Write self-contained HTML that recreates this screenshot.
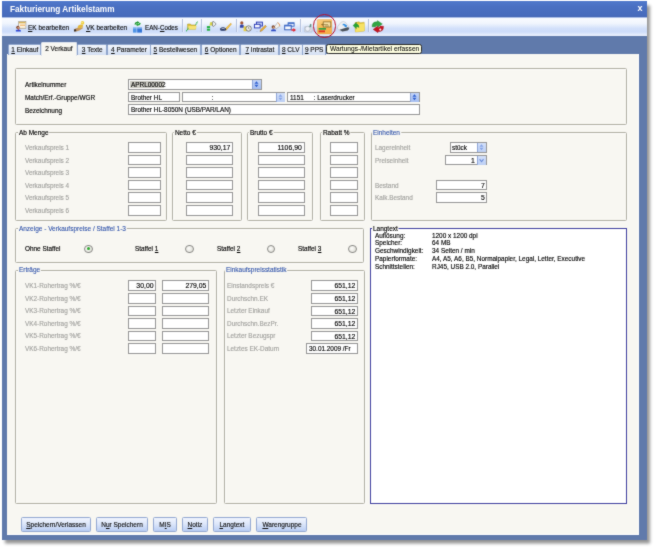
<!DOCTYPE html><html><head><meta charset="utf-8"><title>Fakturierung Artikelstamm</title><style>
html,body{margin:0;padding:0;}
body{width:656px;height:548px;background:#fff;overflow:hidden;position:relative;font-family:"Liberation Sans",sans-serif;font-size:7px;color:#000;-webkit-text-stroke:0.15px;}
#root{left:0;top:0;width:656px;height:548px;background:#fff;will-change:transform;filter:url(#soft);}
div,span{position:absolute;box-sizing:border-box;white-space:nowrap;}
.sl{transform:scaleX(0.915);transform-origin:0 50%;}
.sr{transform:scaleX(0.98);transform-origin:100% 50%;}
.sc{left:0;width:100%;text-align:center;transform:scaleX(0.915);transform-origin:50% 50%;}
.win{left:1.5px;top:1px;width:645.9px;height:538.8px;background:#607aab;box-shadow:3px 3.5px 3px rgba(0,0,0,0.42);}
.title{left:0;top:0;width:645.9px;height:16px;background:linear-gradient(#5079cc,#4a70c2 35%,#476bbc 92%,#4264b2);}
.title .t{left:8.6px;top:3.3px;font-weight:bold;font-size:9px;color:#fff;line-height:10px;-webkit-text-stroke:0;}
.tb{left:0.3px;top:16px;width:645.6px;height:19px;border-top:0.6px solid #a9bde6;background:linear-gradient(#f9fbff 0%,#f0f5fd 30%,#d2e0fa 58%,#cddcf9 76%,#edf2fd 100%);}
.tbt{font-size:7.1px;line-height:9px;top:23.6px;color:#111;}
.sep{top:19.4px;width:0.7px;height:13px;background:#b3c0dc;box-shadow:0.7px 0 0 rgba(255,255,255,0.7);}
.page{background:#f8f7f2;border-right:1px solid #fff;border-bottom:1px solid #fff;}
.tab{top:43.8px;height:10.9px;background:linear-gradient(#f3f6fc,#d3dff3);border:0.6px solid #8fa5cc;border-bottom:none;border-radius:1.5px 1.5px 0 0;font-size:7.1px;line-height:11.2px;color:#111;}
.tab.sel{top:42px;height:13.5px;background:#f8f7f2;border-color:#dfe4ee;line-height:12.4px;z-index:2;}
.gb{border:1px solid #b0afa4;border-radius:1.5px;box-shadow:0.6px 0.6px 0 #fff, inset 0.6px 0.6px 0 #fff;}
.gt{font-size:7.1px;line-height:8px;background:#f8f7f2;padding:0 1px;}
.blue{color:#2f52aa;-webkit-text-stroke:0.1px;}
.l{font-size:7px;line-height:8px;}
.dis{color:#a2a29f;}
.in{background:#fff;border:0.8px solid #969696;font-size:7px;line-height:9.6px;overflow:hidden;}
.in span{top:0;}
.cb{background:linear-gradient(#c9d9f8,#a9c0ee);border:0.6px solid #7f9bd8;border-radius:1px;}
.btn{top:517.3px;height:14.4px;border:0.7px solid #93a8d2;border-radius:1.5px;background:linear-gradient(#f0f4fd,#dde7fa 45%,#b9cdf3);font-size:7.1px;line-height:14.8px;color:#111;}
u{text-decoration:underline;text-decoration-thickness:0.5px;text-underline-offset:0.6px;}
</style></head><body>
<svg width="0" height="0" style="position:absolute"><filter id="soft" x="0" y="0" width="100%" height="100%" color-interpolation-filters="sRGB"><feConvolveMatrix order="3" kernelMatrix="1 3 1 3 24 3 1 3 1" divisor="40" edgeMode="duplicate" preserveAlpha="false"/></filter></svg>
<div id="root">
<div class="win">
<div class="title"><span class="t sl">Fakturierung Artikelstamm</span></div>
<div class="tb"></div>
</div>
<svg style="position:absolute;left:0;top:0" width="400" height="40" viewBox="0 0 400 40">
<!-- EK: card + person -->
<rect x="18.7" y="21.6" width="7.2" height="7" fill="#fffdf8" stroke="#978c74" stroke-width="0.6"/>
<rect x="19" y="21.9" width="6.6" height="1.5" fill="#d9b458"/>
<rect x="19.8" y="24.6" width="5.2" height="1.1" fill="#f0a54a"/>
<rect x="19.8" y="26.7" width="5.2" height="0.8" fill="#f3d9a6"/>
<circle cx="17.9" cy="27.4" r="1.7" fill="#7e4630"/><circle cx="18.3" cy="27.8" r="1" fill="#d39674"/>
<path d="M15.9 31.5 L15.9 30.6 Q16.1 29.4 18.3 29.4 Q20.7 29.4 20.9 30.6 L20.9 31.5 Z" fill="#2345dd"/>
<rect x="17.9" y="29.2" width="0.9" height="1.2" fill="#b83030"/>
<!-- VK: gold figure on hand -->
<path d="M74 29.3 Q77 27.2 80 28 L82.6 27.2 Q83.4 27.6 82.6 28.4 L79.4 30.4 Q76.6 31.6 74.2 31.4 Z" fill="#c39660"/>
<path d="M73.9 29.6 L76 29.2 L76.4 31.3 L74.1 31.6 Z" fill="#3a2f28"/>
<path d="M77.4 27.6 Q77.8 25.2 80.6 24.6 Q83.4 24.4 83.2 26.2 Q82 28 79.2 28.6 Z" fill="#e4b83c"/>
<circle cx="82.5" cy="22.9" r="1.8" fill="#f0d040"/><circle cx="82.1" cy="22.5" r="0.8" fill="#faeb9a"/>
<!-- EAN -->
<rect x="133" y="27.5" width="3.6" height="5.1" fill="#4f94e6"/><rect x="137.2" y="27.5" width="4.8" height="5.1" fill="#3576d6"/>
<rect x="133" y="27.5" width="9" height="1" fill="#9cc3f2"/>
<path d="M134.4 24.4 Q134.8 21.6 137.4 21.8 L137.4 21 L139.4 22.5 L137.4 24 L137.4 23.2 Q136.2 23.2 135.9 24.6 Z" fill="#1c962e"/>
<path d="M140.8 22.9 Q140.4 25.7 137.8 25.5 L137.8 26.3 L135.8 24.8 L137.8 23.3 L137.8 24.1 Q139 24.1 139.3 22.7 Z" fill="#27a83a"/>
<!-- folder w/ arrows -->
<path d="M187.6 24 L190.4 24 L191.2 25 L195.6 25 L195.6 29.2 L187.6 29.2 Z" fill="#e3c63c" stroke="#a39326" stroke-width="0.5"/>
<path d="M188.6 26 L196.6 26 L195.6 29.2 L187.6 29.2 Z" fill="#f6e274"/>
<path d="M195.6 24.8 L197.7 21.6" stroke="#22ae40" stroke-width="1.1" stroke-dasharray="1.2 0.5" fill="none"/>
<path d="M186.3 31.2 L188.4 27.9" stroke="#22ae40" stroke-width="1.1" stroke-dasharray="1.2 0.5" fill="none"/>
<!-- arr -->
<rect x="206.9" y="26.1" width="3.2" height="2" fill="#22b040"/><rect x="206.9" y="28.7" width="3.2" height="2" fill="#22b040"/>
<path d="M209.4 25.6 L210.4 22 L212.9 22.4 L212.6 25.4 Z" fill="#d6d242"/>
<path d="M212.4 21.8 L214 21.6 L216.1 24 L213.9 26.4 L212.5 26 Z" fill="#eceff2" stroke="#55595e" stroke-width="0.6"/>
<!-- pen -->
<path d="M224.6 29.4 L230.4 23.4 Q231.6 23.2 231.2 24.4 L226 30.4 Z" fill="#f2c442" stroke="#c98a24" stroke-width="0.4"/>
<path d="M220.1 28.4 Q222 26.8 224.4 27.4 L226.2 28.8 Q226.6 30 225.4 30.4 Q222.4 31.4 220.2 30.2 Z" fill="#253462"/>
<path d="M221.4 28.8 Q223 28 224.8 28.9" stroke="#e8ecf6" stroke-width="0.7" fill="none"/>
<!-- pdoc -->
<circle cx="241.8" cy="22.9" r="1.6" fill="#a25432"/>
<path d="M239.9 27.8 L239.9 25.8 Q240.1 24.6 241.8 24.6 Q243.6 24.6 243.8 25.8 L243.8 27.8 Z" fill="#3344a6"/>
<rect x="243.6" y="26.4" width="3.8" height="4.8" fill="#e7d146"/>
<circle cx="248.6" cy="28.5" r="2.7" fill="#eeeee6" stroke="#55554f" stroke-width="0.7"/>
<path d="M248.6 27 L248.6 28.6 L249.6 29.2" stroke="#444" stroke-width="0.5" fill="none"/>
<!-- wins -->
<rect x="256.4" y="22.1" width="6" height="3.9" fill="#c6d4f2" stroke="#2232b2" stroke-width="0.9"/>
<rect x="254.4" y="24.3" width="5.7" height="3.6" fill="#f6f8ff" stroke="#2232b2" stroke-width="0.9"/>
<path d="M260 31.6 L260.6 29.8 L265.2 25.2 L266.4 26.4 L261.8 31 Z" fill="#f0b434" stroke="#8a5a1c" stroke-width="0.4"/>
<circle cx="257" cy="31.7" r="0.4" fill="#8890a8"/>
<!-- talk -->
<path d="M274.6 26.6 L277.6 22.6 Q279.8 23.4 279.8 26.2 L276 28.8 Z" fill="#f4f2ee" stroke="#9a968e" stroke-width="0.5"/>
<path d="M277.6 22.6 Q279.8 23.4 279.8 26.2" stroke="#e6a064" stroke-width="0.9" fill="none"/>
<circle cx="273.3" cy="27" r="1.7" fill="#7c4a30"/><circle cx="273.7" cy="27.4" r="1" fill="#d49a78"/>
<path d="M271.1 31.3 L271.1 30.3 Q271.3 29.2 273.5 29.2 Q275.8 29.2 276 30.3 L276 31.3 Z" fill="#2b49c4"/>
<!-- winarr -->
<rect x="288.1" y="22.8" width="6" height="3.4" fill="#eef3ff" stroke="#3262c2" stroke-width="0.9"/>
<rect x="288.1" y="22.8" width="6" height="1" fill="#3262c2"/>
<rect x="284.7" y="25.2" width="6.5" height="4.6" fill="#f8faff" stroke="#2452b4" stroke-width="0.9"/>
<rect x="284.7" y="25.2" width="6.5" height="1.2" fill="#3a68cc"/>
<path d="M291.4 29.3 L293.4 29.3 L293.4 28.1 L296 30 L293.4 31.9 L293.4 30.7 L291.4 30.7 Z" fill="#e2222e"/>
<!-- gray -->
<g opacity="0.85"><rect x="304.3" y="26.6" width="7.8" height="5.4" rx="0.8" fill="#dde1e9" stroke="#a3aab9" stroke-width="0.5"/>
<circle cx="307.6" cy="28.8" r="2.5" fill="#f2f4f8" stroke="#9aa2b4" stroke-width="0.6"/>
<path d="M309.2 27 L310.2 23.8 L311.6 24.6 L311 27.2 Z" fill="#4f8270"/></g>
<!-- hot button -->
<rect x="317.3" y="19.5" width="14.5" height="14.5" rx="0.8" fill="url(#hotg)" stroke="#e2a040" stroke-width="0.4"/>
<rect x="323.2" y="21.9" width="7.6" height="5.1" fill="#f9e2a4" stroke="#7e6224" stroke-width="0.7"/>
<path d="M321 24.6 L328.2 24.6 M322.6 23.6 L322.6 25.6 M324.8 26 L329 26" stroke="#7e6224" stroke-width="0.6" fill="none"/>
<rect x="318.6" y="28" width="7.4" height="1.7" fill="#30a242"/>
<rect x="318.6" y="30.4" width="6.4" height="1.9" fill="#e23422"/>
<!-- drive -->
<path d="M337.6 26.8 L341 22.2 Q343.4 20.6 345.6 22.4 L349.2 27.6 Q349.4 29.6 347.6 30.4 L342.4 31.4 Q339.6 31.2 337.6 29 Z" fill="#eef0f4" stroke="#aab0bc" stroke-width="0.4"/>
<path d="M339.4 29.8 L347.6 27.2 L349.2 27.8 Q349.4 29.6 347.6 30.4 L342.4 31.4 Z" fill="#4a525c"/>
<path d="M342.6 24 Q345 23 346.4 25.2 L347 24.8 L346.6 27.6 L344 26.6 L344.8 26.2 Q344.2 25 342.8 25.4 Z" fill="#308ee2"/>
<!-- folder + green arrow -->
<path d="M355 22.6 L359.2 21.8 L360.2 22.8 L364.2 22.2 L364.4 31 L355.4 32 Z" fill="#e6c83c" stroke="#b49a24" stroke-width="0.4"/>
<path d="M356.2 24.6 L364.6 23.6 L364.4 31 L355.4 32 Z" fill="#f7e266"/>
<path d="M353 25.6 L356.4 22.2 L356.4 24 Q359 24 359 27.6 Q358 26.4 356.4 26.8 L356.4 28.8 Z" fill="#22a434" stroke="#187a26" stroke-width="0.3"/>
<!-- green/red arrows -->
<path d="M372 26.8 Q372 21.4 377.2 21.8 L377.4 20.6 L382.4 23.9 L377.8 27.2 L377.6 25.8 Q375.6 25.4 375.4 27 Z" fill="#30a644" stroke="#1c7a2c" stroke-width="0.3"/>
<path d="M383.6 26.2 Q383.6 32 378.2 31.6 L378 32.7 L373.1 29.4 L377.6 26 L377.8 27.4 Q379.8 27.8 380.2 26 Z" fill="#c41422" stroke="#8a0c16" stroke-width="0.3"/>
<circle cx="380.3" cy="29.6" r="1.1" fill="#f6e6e4"/>
<defs><linearGradient id="hotg" x1="0" y1="0" x2="0.4" y2="1"><stop offset="0" stop-color="#fad28a"/><stop offset="0.5" stop-color="#f8bc58"/><stop offset="1" stop-color="#f6b04a"/></linearGradient></defs>
</svg>
<span class="tbt sl" style="left:28.2px"><u>E</u>K bearbeiten</span>
<span class="tbt sl" style="left:86.4px"><u>V</u>K bearbeiten</span>
<span class="tbt sl" style="left:144.5px;transform:scaleX(0.88)">EAN-<u>C</u>odes</span>
<div class="sep" style="left:182.3px"></div>
<div class="sep" style="left:201.2px"></div>
<div class="sep" style="left:235.6px"></div>
<div class="sep" style="left:299.7px"></div>
<div class="sep" style="left:368.3px"></div>
<div style="left:312.6px;top:14.4px;width:23.2px;height:23.2px;border-radius:50%;border:1.6px solid #ba0f2a;z-index:5"></div>
<div class="page" style="left:6.5px;top:54.4px;width:632.5px;height:480.5px"></div>
<div class="tab" style="left:7.6px;width:33.7px"><span class="sc"><u>1</u> Einkauf</span></div>
<div class="tab sel" style="left:41px;width:35.8px"><span class="sc">2 Verkauf</span></div>
<div class="tab" style="left:76.5px;width:30.5px"><span class="sc"><u>3</u> Texte</span></div>
<div class="tab" style="left:106.7px;width:43.9px"><span class="sc"><u>4</u> Parameter</span></div>
<div class="tab" style="left:150.3px;width:50.7px"><span class="sc"><u>5</u> Bestellwesen</span></div>
<div class="tab" style="left:200.7px;width:39.4px"><span class="sc"><u>6</u> Optionen</span></div>
<div class="tab" style="left:239.8px;width:39.7px"><span class="sc"><u>7</u> Intrastat</span></div>
<div class="tab" style="left:279.2px;width:23.4px"><span class="sc"><u>8</u> CLV</span></div>
<div class="tab" style="left:302.3px;width:24.2px"><span class="sc"><u>9</u> PPS</span></div>
<div class="gb" style="left:15.1px;top:68.3px;width:611.9px;height:56.3px;"></div>
<span class="l sl " style="left:25px;top:81.0px">Artikelnummer</span>
<span class="l sl " style="left:25px;top:93.8px">Match/Erf.-Gruppe/WGR</span>
<span class="l sl " style="left:25px;top:106.5px">Bezeichnung</span>
<div class="in" style="left:128.3px;top:79.2px;width:133.3px;height:10.6px"><span class="sl" style="left:1.6px">APRL00002</span></div>
<div style="left:252.2px;top:79.9px;width:8.6px;height:9.2px;background:linear-gradient(#c4d5f8,#a6bef0);border-left:0.5px solid #8fa6d8"></div>
<svg style="position:absolute;left:252.2px;top:79.2px" width="9.3" height="10.6" viewBox="0 0 10 10" preserveAspectRatio="none"><path d="M4.8 2.2 L7 4.5 L2.6 4.5 Z M4.8 7.8 L7 5.5 L2.6 5.5 Z" fill="#2f5fd0"/></svg>
<div style="left:130.4px;top:81.4px;width:33.4px;height:6.4px;background:#cdccc4;mix-blend-mode:multiply"></div>
<div class="in" style="left:128.3px;top:91.8px;width:51.7px;height:10.6px"><span class="sl" style="left:1.6px">Brother HL</span></div>
<div class="in" style="left:181.5px;top:91.8px;width:103.9px;height:10.6px"><span class="sl" style="left:1.6px"><span style="left:30px;top:0">:</span></span></div>
<div style="left:276.0px;top:92.5px;width:8.6px;height:9.2px;background:linear-gradient(#d3e0fa,#bccff4);border-left:0.5px solid #8fa6d8"></div>
<svg style="position:absolute;left:276.0px;top:91.8px" width="9.3" height="10.6" viewBox="0 0 10 10" preserveAspectRatio="none"><path d="M4.8 2.2 L7 4.5 L2.6 4.5 Z M4.8 7.8 L7 5.5 L2.6 5.5 Z" fill="#86a4e6"/></svg>
<div class="in" style="left:287.4px;top:91.8px;width:132.4px;height:10.6px"><span class="sl" style="left:1.6px">1151<span style="left:26px;top:0">: Laserdrucker</span></span></div>
<div style="left:410.4px;top:92.5px;width:8.6px;height:9.2px;background:linear-gradient(#c4d5f8,#a6bef0);border-left:0.5px solid #8fa6d8"></div>
<svg style="position:absolute;left:410.4px;top:91.8px" width="9.3" height="10.6" viewBox="0 0 10 10" preserveAspectRatio="none"><path d="M4.8 2.2 L7 4.5 L2.6 4.5 Z M4.8 7.8 L7 5.5 L2.6 5.5 Z" fill="#2f5fd0"/></svg>
<div class="in" style="left:128.3px;top:104.4px;width:291.5px;height:10.6px"><span class="sl" style="left:1.6px">Brother HL-8050N (USB/PAR/LAN)</span></div>
<div class="gb" style="left:15.1px;top:132.4px;width:151.9px;height:88.6px;"></div>
<span class="gt sl " style="left:17.6px;top:129.0px;">Ab Menge</span>
<span class="l sl dis" style="left:25px;top:143.9px">Verkaufspreis 1</span>
<div class="in" style="left:128.3px;top:142.2px;width:32.5px;height:10.6px"></div>
<span class="l sl dis" style="left:25px;top:156.5px">Verkaufspreis 2</span>
<div class="in" style="left:128.3px;top:154.8px;width:32.5px;height:10.6px"></div>
<span class="l sl dis" style="left:25px;top:169.1px">Verkaufspreis 3</span>
<div class="in" style="left:128.3px;top:167.3px;width:32.5px;height:10.6px"></div>
<span class="l sl dis" style="left:25px;top:181.6px">Verkaufspreis 4</span>
<div class="in" style="left:128.3px;top:179.9px;width:32.5px;height:10.6px"></div>
<span class="l sl dis" style="left:25px;top:194.2px">Verkaufspreis 5</span>
<div class="in" style="left:128.3px;top:192.4px;width:32.5px;height:10.6px"></div>
<span class="l sl dis" style="left:25px;top:206.8px">Verkaufspreis 6</span>
<div class="in" style="left:128.3px;top:205.0px;width:32.5px;height:10.6px"></div>
<div class="gb" style="left:172px;top:132.4px;width:69.8px;height:88.6px;"></div>
<span class="gt sl " style="left:174px;top:129.0px;">Netto €</span>
<div class="in" style="left:186px;top:142.2px;width:47.0px;height:10.6px"><span class="sr" style="right:1.4px">930,17</span></div>
<div class="in" style="left:186px;top:154.8px;width:47.0px;height:10.6px"></div>
<div class="in" style="left:186px;top:167.3px;width:47.0px;height:10.6px"></div>
<div class="in" style="left:186px;top:179.9px;width:47.0px;height:10.6px"></div>
<div class="in" style="left:186px;top:192.4px;width:47.0px;height:10.6px"></div>
<div class="in" style="left:186px;top:205.0px;width:47.0px;height:10.6px"></div>
<div class="gb" style="left:247px;top:132.4px;width:66.0px;height:88.6px;"></div>
<span class="gt sl " style="left:249px;top:129.0px;">Brutto €</span>
<div class="in" style="left:258px;top:142.2px;width:46.5px;height:10.6px"><span class="sr" style="right:1.4px">1106,90</span></div>
<div class="in" style="left:258px;top:154.8px;width:46.5px;height:10.6px"></div>
<div class="in" style="left:258px;top:167.3px;width:46.5px;height:10.6px"></div>
<div class="in" style="left:258px;top:179.9px;width:46.5px;height:10.6px"></div>
<div class="in" style="left:258px;top:192.4px;width:46.5px;height:10.6px"></div>
<div class="in" style="left:258px;top:205.0px;width:46.5px;height:10.6px"></div>
<div class="gb" style="left:320px;top:132.4px;width:44.5px;height:88.6px;"></div>
<span class="gt sl " style="left:322px;top:129.0px;">Rabatt %</span>
<div class="in" style="left:330px;top:142.2px;width:27.5px;height:10.6px"></div>
<div class="in" style="left:330px;top:154.8px;width:27.5px;height:10.6px"></div>
<div class="in" style="left:330px;top:167.3px;width:27.5px;height:10.6px"></div>
<div class="in" style="left:330px;top:179.9px;width:27.5px;height:10.6px"></div>
<div class="in" style="left:330px;top:192.4px;width:27.5px;height:10.6px"></div>
<div class="in" style="left:330px;top:205.0px;width:27.5px;height:10.6px"></div>
<div class="gb" style="left:370.5px;top:132.4px;width:256.5px;height:88.6px;"></div>
<span class="gt sl blue" style="left:372px;top:129.0px;">Einheiten</span>
<span class="l sl dis" style="left:375px;top:143.9px">Lagereinheit</span>
<span class="l sl dis" style="left:375px;top:156.5px">Preiseinheit</span>
<span class="l sl dis" style="left:375px;top:181.6px">Bestand</span>
<span class="l sl dis" style="left:375px;top:194.2px">Kalk.Bestand</span>
<div class="in" style="left:449.8px;top:142.2px;width:37.0px;height:10.6px"><span class="sl" style="left:1.6px">stück</span></div>
<div style="left:477.4px;top:142.9px;width:8.6px;height:9.2px;background:linear-gradient(#d3e0fa,#bccff4);border-left:0.5px solid #8fa6d8"></div>
<svg style="position:absolute;left:477.4px;top:142.2px" width="9.3" height="10.6" viewBox="0 0 10 10" preserveAspectRatio="none"><path d="M4.8 2.2 L7 4.5 L2.6 4.5 Z M4.8 7.8 L7 5.5 L2.6 5.5 Z" fill="#86a4e6"/></svg>
<div class="in" style="left:445.3px;top:154.8px;width:41.5px;height:10.6px"><span class="sr" style="right:10.6px">1</span></div>
<div style="left:477.4px;top:155.5px;width:8.6px;height:9.2px;background:linear-gradient(#d3e0fa,#bccff4);border-left:0.5px solid #8fa6d8"></div>
<svg style="position:absolute;left:477.4px;top:154.8px" width="9.3" height="10.6" viewBox="0 0 10 10" preserveAspectRatio="none"><path d="M2.8 4 L4.9 6.2 L7 4" stroke="#6a8cd8" stroke-width="1.1" fill="none"/></svg>
<div class="in" style="left:435.5px;top:179.9px;width:51.3px;height:10.6px"><span class="sr" style="right:1.4px">7</span></div>
<div class="in" style="left:435.5px;top:192.4px;width:51.3px;height:10.6px"><span class="sr" style="right:1.4px">5</span></div>
<div class="gb" style="left:15.1px;top:228.4px;width:349.4px;height:34.6px;"></div>
<span class="gt sl blue" style="left:17.6px;top:225.0px;">Anzeige - Verkaufspreise / Staffel 1-3</span>
<span class="l sl " style="left:25px;top:245.1px">Ohne Staffel</span>
<span class="l sl " style="left:135px;top:245.1px">Staffel <u>1</u></span>
<span class="l sl " style="left:217px;top:245.1px">Staffel <u>2</u></span>
<span class="l sl " style="left:298px;top:245.1px">Staffel <u>3</u></span>
<div style="left:84.2px;top:244.5px;width:8.6px;height:8.6px;border-radius:50%;border:0.8px solid #8b8b88;background:radial-gradient(circle at 40% 40%,#fdfdfb,#d6d5cc)"></div>
<div style="left:87.0px;top:247.3px;width:3px;height:3px;border-radius:50%;background:#2fa82f"></div>
<div style="left:185.2px;top:244.5px;width:8.6px;height:8.6px;border-radius:50%;border:0.8px solid #8b8b88;background:radial-gradient(circle at 40% 40%,#fdfdfb,#d6d5cc)"></div>
<div style="left:266.7px;top:244.5px;width:8.6px;height:8.6px;border-radius:50%;border:0.8px solid #8b8b88;background:radial-gradient(circle at 40% 40%,#fdfdfb,#d6d5cc)"></div>
<div style="left:348.2px;top:244.5px;width:8.6px;height:8.6px;border-radius:50%;border:0.8px solid #8b8b88;background:radial-gradient(circle at 40% 40%,#fdfdfb,#d6d5cc)"></div>
<div class="gb" style="left:15.1px;top:269.6px;width:201.9px;height:234.6px;"></div>
<span class="gt sl blue" style="left:17.6px;top:266.2px;">Erträge</span>
<span class="l sl dis" style="left:25px;top:282.1px">VK1-Rohertrag %/€</span>
<div class="in" style="left:128.3px;top:280.4px;width:27.7px;height:10.6px"><span class="sr" style="right:1.4px">30,00</span></div>
<div class="in" style="left:162.2px;top:280.4px;width:46.5px;height:10.6px"><span class="sr" style="right:1.4px">279,05</span></div>
<span class="l sl dis" style="left:25px;top:294.7px">VK2-Rohertrag %/€</span>
<div class="in" style="left:128.3px;top:293.0px;width:27.7px;height:10.6px"></div>
<div class="in" style="left:162.2px;top:293.0px;width:46.5px;height:10.6px"></div>
<span class="l sl dis" style="left:25px;top:307.3px">VK3-Rohertrag %/€</span>
<div class="in" style="left:128.3px;top:305.5px;width:27.7px;height:10.6px"></div>
<div class="in" style="left:162.2px;top:305.5px;width:46.5px;height:10.6px"></div>
<span class="l sl dis" style="left:25px;top:319.8px">VK4-Rohertrag %/€</span>
<div class="in" style="left:128.3px;top:318.1px;width:27.7px;height:10.6px"></div>
<div class="in" style="left:162.2px;top:318.1px;width:46.5px;height:10.6px"></div>
<span class="l sl dis" style="left:25px;top:332.4px">VK5-Rohertrag %/€</span>
<div class="in" style="left:128.3px;top:330.6px;width:27.7px;height:10.6px"></div>
<div class="in" style="left:162.2px;top:330.6px;width:46.5px;height:10.6px"></div>
<span class="l sl dis" style="left:25px;top:344.9px">VK6-Rohertrag %/€</span>
<div class="in" style="left:128.3px;top:343.2px;width:27.7px;height:10.6px"></div>
<div class="in" style="left:162.2px;top:343.2px;width:46.5px;height:10.6px"></div>
<div class="gb" style="left:223.5px;top:269.6px;width:141.0px;height:234.6px;"></div>
<span class="gt sl blue" style="left:225px;top:266.2px;">Einkaufspreisstatistik</span>
<span class="l sl dis" style="left:226.5px;top:282.1px">Einstandspreis €</span>
<div class="in" style="left:310.5px;top:280.4px;width:47.0px;height:10.6px"><span class="sr" style="right:1.4px">651,12</span></div>
<span class="l sl dis" style="left:226.5px;top:294.7px">Durchschn.EK</span>
<div class="in" style="left:310.5px;top:293.0px;width:47.0px;height:10.6px"><span class="sr" style="right:1.4px">651,12</span></div>
<span class="l sl dis" style="left:226.5px;top:307.3px">Letzter Einkauf</span>
<div class="in" style="left:310.5px;top:305.5px;width:47.0px;height:10.6px"><span class="sr" style="right:1.4px">651,12</span></div>
<span class="l sl dis" style="left:226.5px;top:319.8px">Durchschn.BezPr.</span>
<div class="in" style="left:310.5px;top:318.1px;width:47.0px;height:10.6px"><span class="sr" style="right:1.4px">651,12</span></div>
<span class="l sl dis" style="left:226.5px;top:332.4px">Letzter Bezugspr</span>
<div class="in" style="left:310.5px;top:330.6px;width:47.0px;height:10.6px"><span class="sr" style="right:1.4px">651,12</span></div>
<span class="l sl dis" style="left:226.5px;top:344.9px">Letztes EK-Datum</span>
<div class="in" style="left:306px;top:343.2px;width:51.5px;height:10.6px"><span class="sl" style="left:1.6px">30.01.2009 /Fr</span></div>
<div style="left:370.4px;top:228px;width:257.1px;height:276.3px;background:#fff;border:0.75px solid #4040a0"></div>
<span class="gt sl" style="left:372px;top:224.8px;background:linear-gradient(#f8f7f2 45%,#fff 45%)">Langtext</span>
<span class="l sl " style="left:374.5px;top:231.6px">Auflösung:</span>
<span class="l sl " style="left:432px;top:231.6px">1200 x 1200 dpi</span>
<span class="l sl " style="left:374.5px;top:239.4px">Speicher:</span>
<span class="l sl " style="left:432px;top:239.4px">64 MB</span>
<span class="l sl " style="left:374.5px;top:247.2px">Geschwindigkeit:</span>
<span class="l sl " style="left:432px;top:247.2px">34 Seiten / min</span>
<span class="l sl " style="left:374.5px;top:255.0px">Papierformate:</span>
<span class="l sl " style="left:432px;top:255.0px">A4, A5, A6, B5, Normalpapier, Legal, Letter, Executive</span>
<span class="l sl " style="left:374.5px;top:262.8px">Schnittstellen:</span>
<span class="l sl " style="left:432px;top:262.8px">RJ45, USB 2.0, Parallel</span>
<div class="btn" style="left:20.6px;width:70.0px"><span class="sc"><u>S</u>peichern/Verlassen</span></div>
<div class="btn" style="left:95.6px;width:52.0px"><span class="sc">N<u>u</u>r Speichern</span></div>
<div class="btn" style="left:152.6px;width:24.30000000000001px"><span class="sc">M<u>I</u>S</span></div>
<div class="btn" style="left:182.1px;width:25.900000000000006px"><span class="sc"><u>N</u>otiz</span></div>
<div class="btn" style="left:213px;width:37.80000000000001px"><span class="sc"><u>L</u>angtext</span></div>
<div class="btn" style="left:255.5px;width:51.89999999999998px"><span class="sc"><u>W</u>arengruppe</span></div>
<div style="left:326.4px;top:43.9px;width:95.3px;height:10.1px;background:#ffffe1;border:0.7px solid #2a2a2a;border-radius:2.4px;font-size:7.1px;line-height:8.9px;z-index:6;-webkit-text-stroke:0.06px"><span class="sl" style="left:2.6px;top:0;transform:scaleX(0.93)">Wartungs-/Mietartikel erfassen</span></div>
<span style="left:637.6px;top:3.2px;color:#fff;font-weight:bold;font-size:9px;line-height:10px;-webkit-text-stroke:0">x</span>
</div></body></html>
